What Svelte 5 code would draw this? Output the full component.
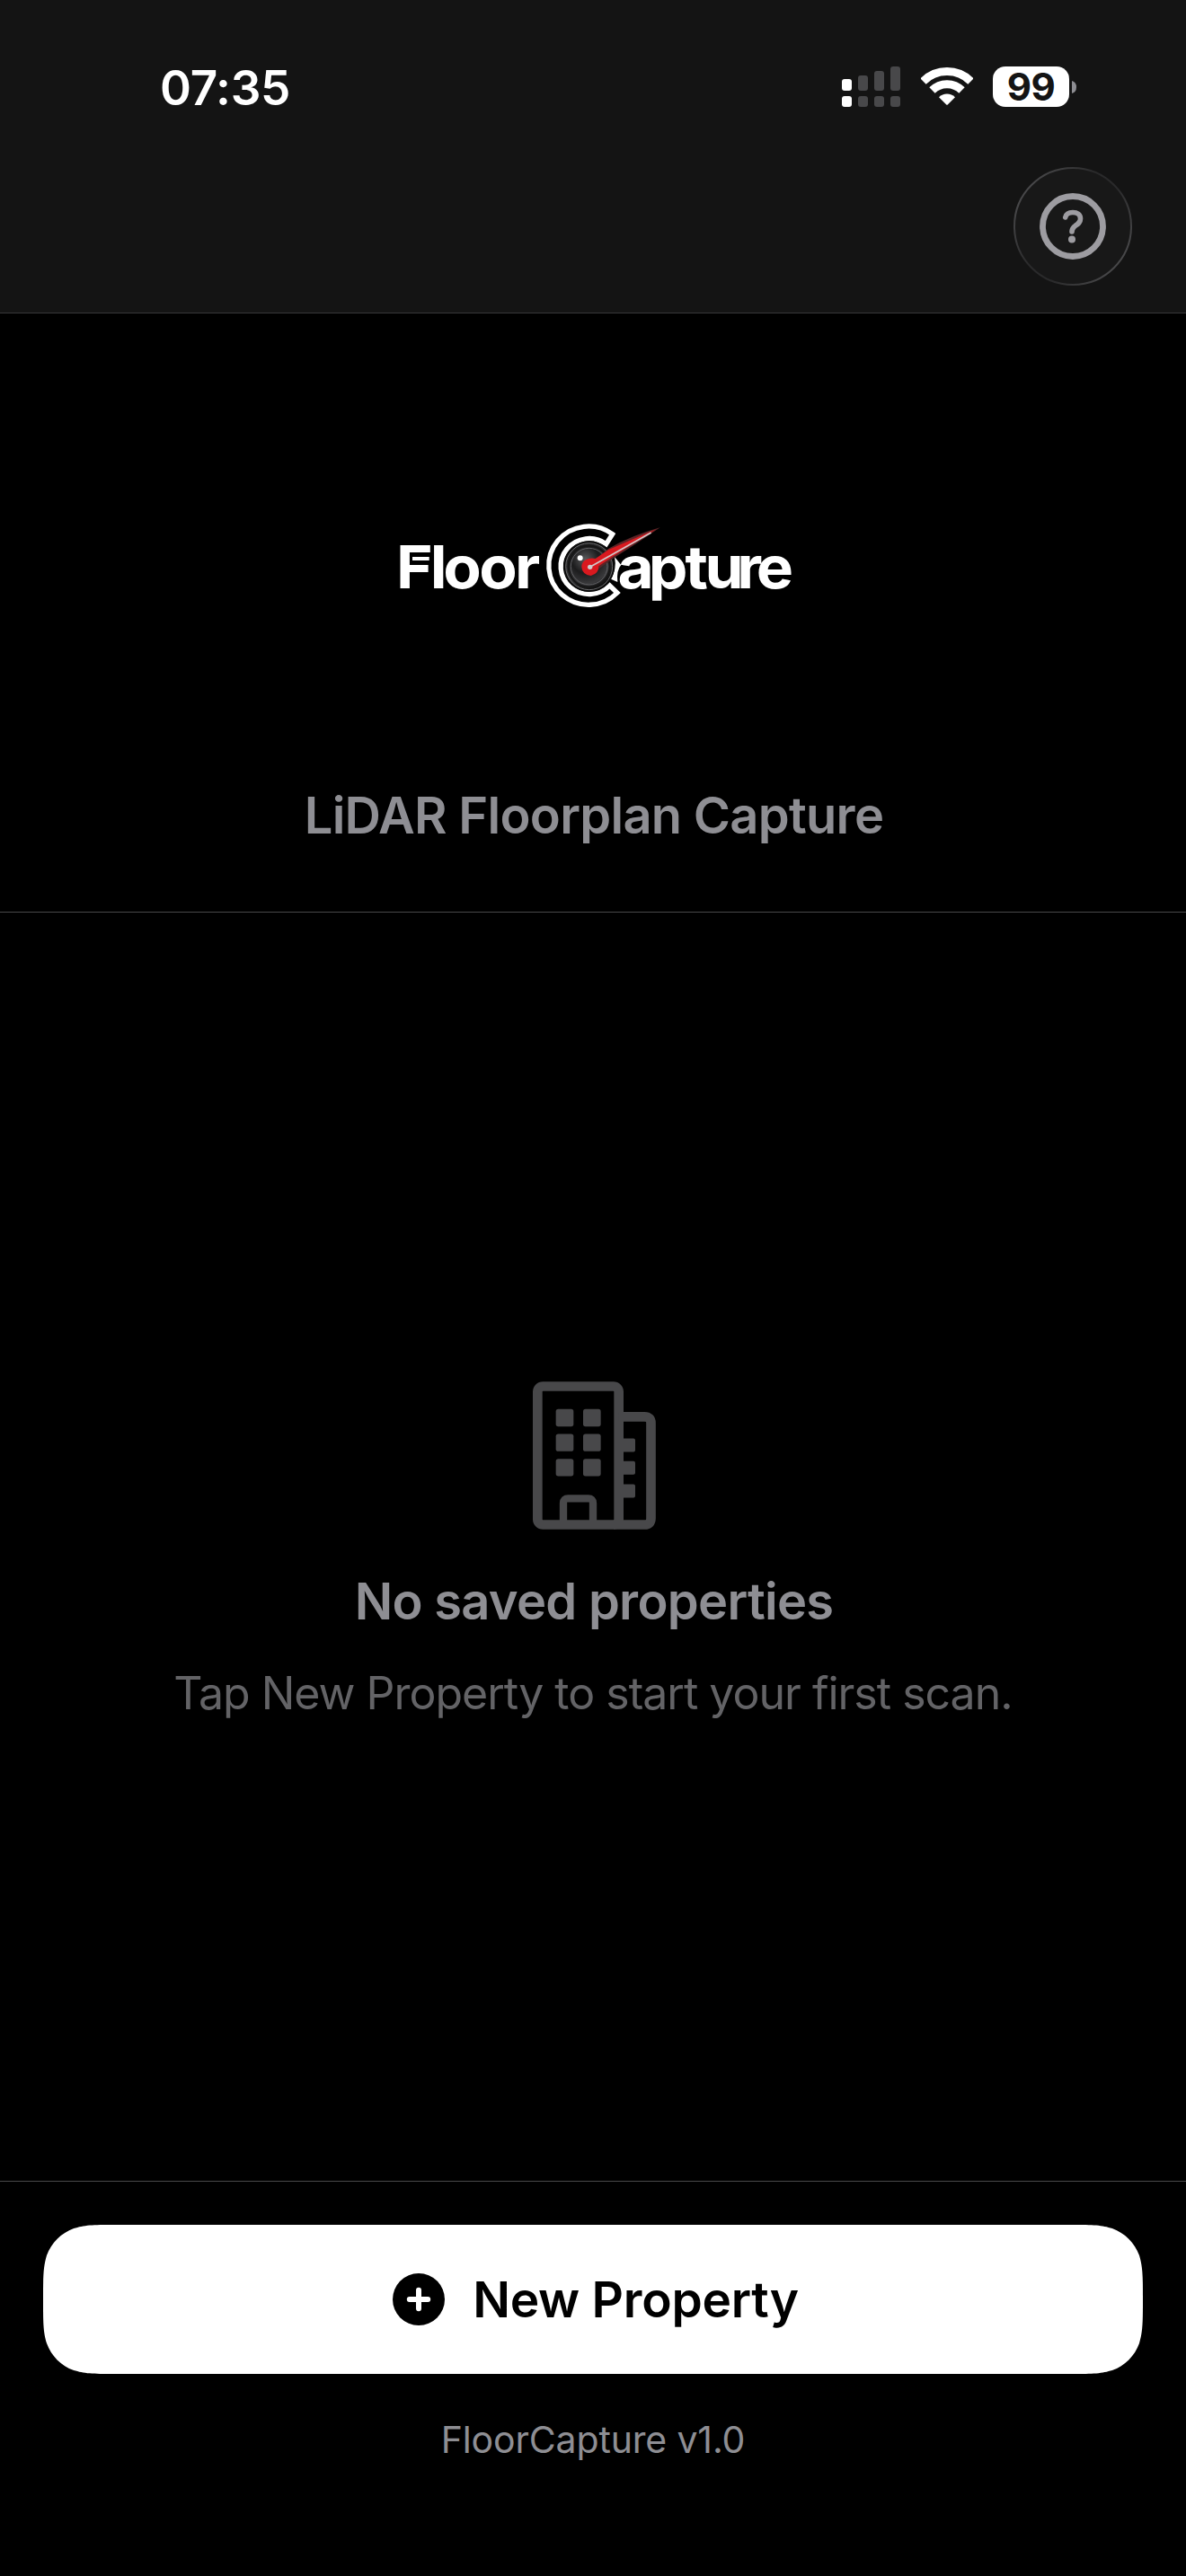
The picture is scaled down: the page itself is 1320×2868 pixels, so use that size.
<script>
	const time = '07:35';
	const battery = 99;
	const signal = [
		{ x: 0, y: 14, on: true },
		{ x: 18, y: 10, on: false },
		{ x: 36, y: 5, on: false },
		{ x: 54, y: 0, on: false }
	];
	const windows = [
		[77, 92], [168, 92],
		[77, 175], [168, 175],
		[77, 258], [168, 258]
	];
</script>

<div class="screen">
	<header>
		<div class="status">
			<span class="time">{time}</span>
			<div class="indicators">
				<svg class="signal" viewBox="0 0 65 45">
					{#each signal as bar}
						<g class:on={bar.on}>
							<rect x={bar.x} y={bar.y} width="11" height={27 - bar.y} rx="3" />
							<rect x={bar.x} y="33" width="11" height="12" rx="3" />
						</g>
					{/each}
				</svg>
				<svg class="wifi" viewBox="0 0 174 128">
					<path class="arc" d="M7.5 46.500a112.500 112.500 0 0 1 159 0" />
					<path class="arc" d="M37.500 76.500a70 70 0 0 1 99 0" />
					<path d="M60 99.500a39 39 0 0 1 54 0L90 124q-3 3-6 0z" />
				</svg>
				<div class="battery">
					<span class="level">{battery}</span>
					<svg class="nub" viewBox="0 0 5 14"><path d="M0 0Q5 1.500 5 7T0 14z" /></svg>
				</div>
			</div>
		</div>
		<button class="help" aria-label="Help">
			<svg viewBox="0 0 132 132">
				<defs>
					<linearGradient id="rim" x1="0" y1="0.150" x2="1" y2="0.850">
						<stop offset="0" stop-color="#505052" />
						<stop offset="0.400" stop-color="#2a2a2b" />
						<stop offset="0.600" stop-color="#2a2a2b" />
						<stop offset="1" stop-color="#505052" />
					</linearGradient>
				</defs>
				<circle cx="66" cy="66" r="65" fill="#181818" stroke="url(#rim)" stroke-width="2" />
				<circle class="line" cx="66" cy="66" r="33.500" stroke-width="6.800" />
				<path class="line" d="M57.700 56C58.500 52.500 61.500 50.500 66 50.500C71 50.500 74.500 53 74.500 57.500C74.500 61.500 72 63.200 69 65.200C66.200 67.200 65 68.500 65 72" stroke-width="5.600" />
				<circle class="dot" cx="65" cy="80.500" r="4" />
			</svg>
		</button>
	</header>

	<section class="hero">
		<svg class="logo" viewBox="420 560 480 140">
			<defs>
				<radialGradient id="lens" cx="0.420" cy="0.350" r="0.650">
					<stop offset="0" stop-color="#5a5a5c" />
					<stop offset="0.450" stop-color="#1c1c1d" />
					<stop offset="0.800" stop-color="#39393b" />
					<stop offset="1" stop-color="#0c0c0c" />
				</radialGradient>
			</defs>
			<text transform="translate(441 654.700) scale(1.060 1)" x="0 35.600 49.400 87.100 124.600">Floor</text>
			<rect x="459" y="620" width="18.700" height="4" fill="#fff" />
			<text transform="translate(687 654.700) scale(1.060 1)" x="0.500 32.800 71.200 92 125.600 146">apture</text>
			<g transform="translate(590 560) scale(0.333333)">
				<path class="ring" d="M275 104A133 131 0 1 0 291 300L266 276A95 93 0 1 1 254 137z" />
				<path d="M282 180L304 207Q288 224 292 264L270 254Q290 220 282 180z" fill="#fff" />
				<circle cx="197" cy="212" r="85" fill="#0b0b0b" />
				<circle cx="197" cy="212" r="78" fill="url(#lens)" stroke="#6b6b6d" stroke-width="3" />
				<circle cx="197" cy="212" r="69" fill="none" stroke="#161616" stroke-width="6" />
				<circle cx="197" cy="212" r="61" fill="none" stroke="#5f5f62" stroke-width="3" />
				<circle cx="167" cy="184" r="9" fill="#fff" />
				<path d="M218 190L262 152Q340 108 434 82Q360 134 282 182L226 222z" fill="#5a2426" />
				<path d="M186 190Q200 182 218 186L262 156L420 88L276 179L229 211Q230 236 203 243Q174 240 172 214Q172 197 186 190z" fill="#d9191f" />
				<path d="M200 214L404 99" stroke="#d2c8c9" stroke-width="5" />
				<circle cx="200" cy="214" r="8" fill="#d0cdce" />
			</g>
		</svg>
		<h1>LiDAR Floorplan Capture</h1>
	</section>

	<main>
		<svg class="building" viewBox="0 0 411 494">
			<rect class="outline" x="16" y="16" width="271" height="462" rx="18" />
			<path class="outline" d="M287 117.500H373Q394.500 117.500 394.500 139V456Q394.500 478 373 478H270" />
			{#each windows as [x, y]}
				<rect {x} {y} width="59" height="58" rx="8" />
			{/each}
			<path d="M300 190h36q6 0 6 6v33q0 6-6 6h-36zM300 266h36q6 0 6 6v33q0 6-6 6h-36zM300 343h36q6 0 6 6v33q0 6-6 6h-36z" />
			<path class="door" d="M102 470V406Q102 390.500 118 390.500H185Q201 390.500 201 406V470" />
		</svg>
		<h2>No saved properties</h2>
		<p>Tap New Property to start your first scan.</p>
	</main>

	<footer>
		<button class="new">
			<svg viewBox="0 0 58 58">
				<circle cx="29" cy="29" r="29" />
				<path d="M29 18.800V39.200M18.800 29H39.200" />
			</svg>
			<span>New Property</span>
		</button>
		<small>FloorCapture v1.0</small>
	</footer>
</div>

<style>
	:global(body) {
		background: #000;
	}

	.screen {
		display: flex;
		flex-direction: column;
		width: 1320px;
		height: 2868px;
		background: #000;
		color: #fff;
		font-family: Inter, 'Liberation Sans', sans-serif;
		overflow: hidden;
	}

	h1, h2, p {
		margin: 0;
		white-space: nowrap;
	}

	button {
		border: 0;
		padding: 0;
		background: none;
		font-family: inherit;
	}

	svg {
		display: block;
		flex: none;
	}

	header {
		box-sizing: border-box;
		display: flex;
		flex-direction: column;
		height: 349px;
		padding-top: 66px;
		background: #141414;
		border-bottom: 1px solid #38383a;
	}

	.status {
		display: flex;
		justify-content: space-between;
		height: 120px;
		padding: 0 122px 0 178px;
	}

	.time {
		font-size: 53px;
		font-weight: 600;
		letter-spacing: -0.300px;
		line-height: 64px;
	}

	.indicators {
		display: flex;
		height: 45px;
		margin-top: 8px;
	}

	.signal {
		width: 65px;
		height: 45px;
		margin-right: 23px;
		fill: #48484a;
	}

	.signal .on {
		fill: #fff;
	}

	.wifi {
		width: 58px;
		height: 42.700px;
		margin: 1px 22px 0 0;
		fill: #fff;
	}

	.wifi .arc {
		fill: none;
		stroke: #fff;
		stroke-width: 27;
	}

	.battery {
		display: flex;
		align-items: center;
		gap: 3px;
	}

	.level {
		width: 85px;
		height: 45px;
		border-radius: 14px;
		background: #fff;
		color: #141414;
		font-size: 42px;
		font-weight: 650;
		letter-spacing: -0.500px;
		line-height: 45px;
		text-align: center;
	}

	.nub {
		width: 5px;
		height: 14px;
		fill: #8e8e93;
	}

	.help {
		align-self: flex-end;
		width: 132px;
		height: 132px;
		margin-right: 60px;
	}

	.help .line {
		fill: none;
		stroke: #9d9ca1;
		stroke-linecap: round;
	}

	.help .dot {
		fill: #9d9ca1;
	}

	.hero {
		box-sizing: border-box;
		display: flex;
		flex-direction: column;
		align-items: center;
		height: 667px;
		padding-top: 211px;
		border-bottom: 1px solid #48484a;
	}

	.logo {
		width: 480px;
		height: 140px;
		margin-bottom: 174px;
	}

	.logo text {
		fill: #fff;
		font-size: 65.500px;
		font-weight: 700;
	}

	.ring {
		fill: #000;
		stroke: #fff;
		stroke-width: 16;
	}

	h1, h2 {
		margin-left: 2px;
		color: #8e8e93;
		font-size: 56px;
		font-weight: 600;
		letter-spacing: -0.720px;
		line-height: 68px;
	}

	main {
		flex: 1;
		display: flex;
		flex-direction: column;
		align-items: center;
		padding-top: 522px;
	}

	.building {
		width: 137px;
		height: 165px;
		margin-bottom: 46px;
		margin-left: 2px;
		fill: #48484a;
	}

	.building .outline {
		fill: none;
		stroke: #48484a;
		stroke-width: 32;
	}

	.building .door {
		fill: none;
		stroke: #48484a;
		stroke-width: 25;
	}

	p {
		margin-top: 37px;
		color: #636366;
		font-size: 50px;
		letter-spacing: -1px;
		line-height: 62px;
	}

	footer {
		box-sizing: border-box;
		display: flex;
		flex-direction: column;
		align-items: center;
		height: 440px;
		padding-top: 48px;
		border-top: 1px solid #48484a;
	}

	/* continuous corners, 54px */
	.new {
		display: flex;
		align-items: center;
		justify-content: center;
		gap: 31px;
		width: 1224px;
		height: 166px;
		padding-left: 6px;
		background: #fff;
		color: #000;
		font-size: 55px;
		font-weight: 600;
		letter-spacing: -0.250px;
		clip-path: path('M82.500 0H1141.500C1165.200 0 1177.100 0 1187.800 3.500L1189.900 4C1203.900 9.100 1214.900 20.100 1220 34.100C1224 46.900 1224 58.800 1224 82.500V83.500C1224 107.200 1224 119.100 1220 131.900C1214.900 145.900 1203.900 156.900 1189.900 162L1187.800 162.500C1177.100 166 1165.200 166 1141.500 166H82.500C58.800 166 46.900 166 36.200 162.500L34.100 162C20.100 156.900 9.100 145.900 4 131.900C0 119.100 0 107.200 0 83.500V82.500C0 58.800 0 46.900 4 34.100C9.100 20.100 20.100 9.100 34.100 4L36.200 3.500C46.900 0 58.800 0 82.500 0Z');
	}

	.new svg {
		width: 58px;
		height: 58px;
	}

	.new path {
		stroke: #fff;
		stroke-width: 6;
		stroke-linecap: round;
	}

	small {
		margin-top: 48px;
		color: #8e8e93;
		font-size: 41px;
		letter-spacing: -0.150px;
		line-height: 50px;
	}
</style>
